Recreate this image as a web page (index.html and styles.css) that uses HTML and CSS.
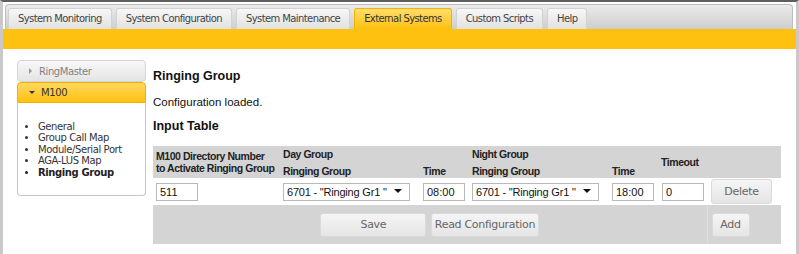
FILE: index.html
```html
<!DOCTYPE html>
<html lang="en">
<head>
  <meta charset="UTF-8" />
  <title>Ringing Group - External Systems</title>
  <link rel="stylesheet" href="styles.css">
</head>
<body>
  <div class="frame">

    <!-- TOP TABS -->
    <ul class="tabs">
      <li class="tab">System Monitoring</li>
      <li class="tab">System Configuration</li>
      <li class="tab">System Maintenance</li>
      <li class="tab active">External Systems</li>
      <li class="tab">Custom Scripts</li>
      <li class="tab">Help</li>
    </ul>
    <div class="band"></div>

    <div class="page-body">

      <!-- SIDEBAR -->
      <div class="side">
        <div class="acc-head closed"><span class="arrow-right"></span>RingMaster</div>
        <div class="acc-head open"><span class="arrow-down"></span>M100</div>
        <div class="acc-panel">
          <ul>
            <li>General</li>
            <li>Group Call Map</li>
            <li>Module/Serial Port</li>
            <li>AGA-LUS Map</li>
            <li class="current">Ringing Group</li>
          </ul>
        </div>
      </div>

      <!-- CONTENT -->
      <div class="content">
        <h2>Ringing Group</h2>
        <p class="status">Configuration loaded.</p>
        <h3>Input Table</h3>

        <table class="grid">
          <colgroup>
            <col class="c-dir">
            <col class="c-group">
            <col class="c-time">
            <col class="c-group">
            <col class="c-time2">
            <col class="c-timeout">
            <col class="c-action">
          </colgroup>
          <thead>
            <tr class="head-1">
              <th rowspan="2" class="mid">M100 Directory Number<br>to Activate Ringing Group</th>
              <th colspan="2">Day Group</th>
              <th colspan="2">Night Group</th>
              <th rowspan="2" class="mid">Timeout</th>
              <th rowspan="2"></th>
            </tr>
            <tr class="head-2">
              <th>Ringing Group</th>
              <th>Time</th>
              <th>Ringing Group</th>
              <th>Time</th>
            </tr>
          </thead>
          <tbody>
            <tr class="data">
              <td><input type="text" class="short" value="511"></td>
              <td>
                <span class="select-wrap">
                  <select><option>6701 - "Ringing Gr1 "</option></select>
                </span>
              </td>
              <td><input type="text" class="short" value="08:00"></td>
              <td>
                <span class="select-wrap">
                  <select><option>6701 - "Ringing Gr1 "</option></select>
                </span>
              </td>
              <td><input type="text" class="short" value="18:00"></td>
              <td><input type="text" class="short" value="0"></td>
              <td><button class="btn btn-delete">Delete</button></td>
            </tr>
            <tr class="foot">
              <td colspan="6" class="foot-main">
                <button class="btn btn-wide">Save</button>
                <button class="btn btn-wide">Read Configuration</button>
              </td>
              <td class="foot-side"><button class="btn btn-add">Add</button></td>
            </tr>
          </tbody>
        </table>
      </div>

    </div>
  </div>
</body>
</html>
```

FILE: styles.css
```css
body {
  margin: 0;
  font-family: "DejaVu Sans", Verdana, sans-serif;
  background: #fff;
}

.frame {
  height: 254px;
  box-sizing: border-box;
  border-top: 2px solid #5e5e5e;
  border-left: 3px solid #c9c9c9;
  border-right: 3px solid #c9c9c9;
}

/* tabs */
.tabs {
  display: flex;
  gap: 4px;
  list-style: none;
  margin: 2px 3px 0 2px;
  padding: 3px 0 0 2px;
  height: 25px;
  box-sizing: border-box;
  border: 1px solid #bdbdbd;
  border-bottom: none;
  border-radius: 4px 4px 0 0;
  background: linear-gradient(#ebebeb, #cdcdcd);
}

.tab {
  height: 21px;
  box-sizing: border-box;
  padding: 0 9px;
  line-height: 20px;
  font-size: 10px;
  letter-spacing: -0.6px;
  color: #444;
  border: 1px solid #d2d2d2;
  border-bottom: none;
  border-radius: 3px 3px 0 0;
  background: linear-gradient(#f7f7f7, #e1e1e1);
}

.tab.active {
  color: #333;
  border-color: #f1b400;
  background: linear-gradient(#ffdc6e, #fec10f);
}

.band {
  height: 20px;
  background: #fec10f;
}

/* layout */
.page-body {
  display: flex;
  gap: 7px;
  padding: 11px 15px 0 14px;
}

/* sidebar */
.side {
  width: 129px;
  flex-shrink: 0;
  font-size: 10px;
  letter-spacing: -0.4px;
}

.acc-head {
  display: flex;
  align-items: center;
  box-sizing: border-box;
  padding-left: 11px;
  border: 1px solid #d4d4d4;
}

.acc-head.closed {
  height: 22px;
  color: #808080;
  border-radius: 4px;
  background: linear-gradient(#f8f8f8, #e4e4e4);
}

.acc-head.open {
  height: 21px;
  color: #333;
  border-color: #f0b000;
  border-radius: 4px 4px 0 0;
  background: linear-gradient(#ffd861, #fec10f);
}

.arrow-right {
  width: 0;
  height: 0;
  margin-right: 7px;
  border-top: 3px solid transparent;
  border-bottom: 3px solid transparent;
  border-left: 3px solid #999;
}

.arrow-down {
  width: 0;
  height: 0;
  margin-right: 6px;
  border-left: 3px solid transparent;
  border-right: 3px solid transparent;
  border-top: 3px solid #333;
}

.acc-panel {
  border: 1px solid #c6c6c6;
  border-top: none;
  border-radius: 0 0 4px 4px;
  background: #fff;
}

.acc-panel ul {
  margin: 0;
  padding: 18px 0 17px 20px;
  line-height: 11.4px;
  color: #333;
}

.acc-panel li.current {
  font-weight: bold;
  color: #222;
}

/* content */
.content {
  flex: 1;
  font-family: "Liberation Sans", Arial, sans-serif;
  color: #111;
}

.content h2,
.content h3 {
  font-size: 12.5px;
  line-height: 15px;
  margin: 0;
}

.content h2 {
  margin-top: 9px;
}

.status {
  font-size: 11.5px;
  line-height: 14px;
  margin: 11px 0 0;
}

.content h3 {
  margin-top: 10px;
}

/* table */
.grid {
  width: 628px;
  margin-top: 12px;
  border-collapse: collapse;
  table-layout: fixed;
}

.c-dir { width: 126px; }
.c-group { width: 140px; }
.c-time { width: 49px; }
.c-time2 { width: 50px; }
.c-timeout { width: 49px; }
.c-action { width: 74px; }

.grid th {
  background: #d4d4d4;
  text-align: left;
  padding: 0 4px;
  font-size: 10.5px;
  letter-spacing: -0.45px;
  color: #222;
  line-height: 12px;
  white-space: nowrap;
}

.head-1 th { height: 15px; vertical-align: middle; }
.head-2 th { height: 16px; vertical-align: bottom; padding-bottom: 1px; }
.grid th.mid { vertical-align: middle; padding-left: 3px; }

.grid td {
  padding: 0 4px;
  vertical-align: middle;
}

.data td {
  height: 27px;
  background: #fff;
}

.short {
  width: 42px;
  height: 18px;
  box-sizing: border-box;
  border: 1px solid #b8b8b8;
  padding: 0 3px;
  margin: 0;
  font-family: "Liberation Sans", Arial, sans-serif;
  font-size: 11px;
  color: #111;
}

.data td:first-child {
  padding-left: 3px;
}

.select-wrap {
  position: relative;
  display: block;
  width: 127px;
}

.select-wrap select {
  appearance: none;
  -webkit-appearance: none;
  width: 127px;
  height: 18px;
  box-sizing: border-box;
  margin: 0;
  padding: 0 3px;
  border: 1px solid #b8b8b8;
  border-radius: 0;
  background: #fff;
  font-family: "Liberation Sans", Arial, sans-serif;
  font-size: 11px;
  letter-spacing: -0.2px;
  color: #111;
}

.select-wrap::after {
  content: "";
  position: absolute;
  right: 8px;
  top: 7px;
  border-left: 4px solid transparent;
  border-right: 4px solid transparent;
  border-top: 4px solid #111;
  pointer-events: none;
}

.foot td {
  height: 39px;
  background: #d4d4d4;
}

.foot-main {
  text-align: center;
}

.foot-side {
  border-left: 1px solid #dedede;
}

.btn {
  height: 24px;
  box-sizing: border-box;
  margin: 0;
  padding: 0 3px;
  border: 1px solid #dadada;
  border-radius: 3px;
  background: linear-gradient(#f5f5f5, #e5e5e5);
  font-family: "DejaVu Sans", Verdana, sans-serif;
  font-size: 11px;
  letter-spacing: -0.3px;
  color: #666;
  cursor: pointer;
}

.btn-wide {
  min-width: 106px;
}

.btn-delete {
  width: 61px;
  height: 25px;
}

.btn-add {
  width: 38px;
}
```
